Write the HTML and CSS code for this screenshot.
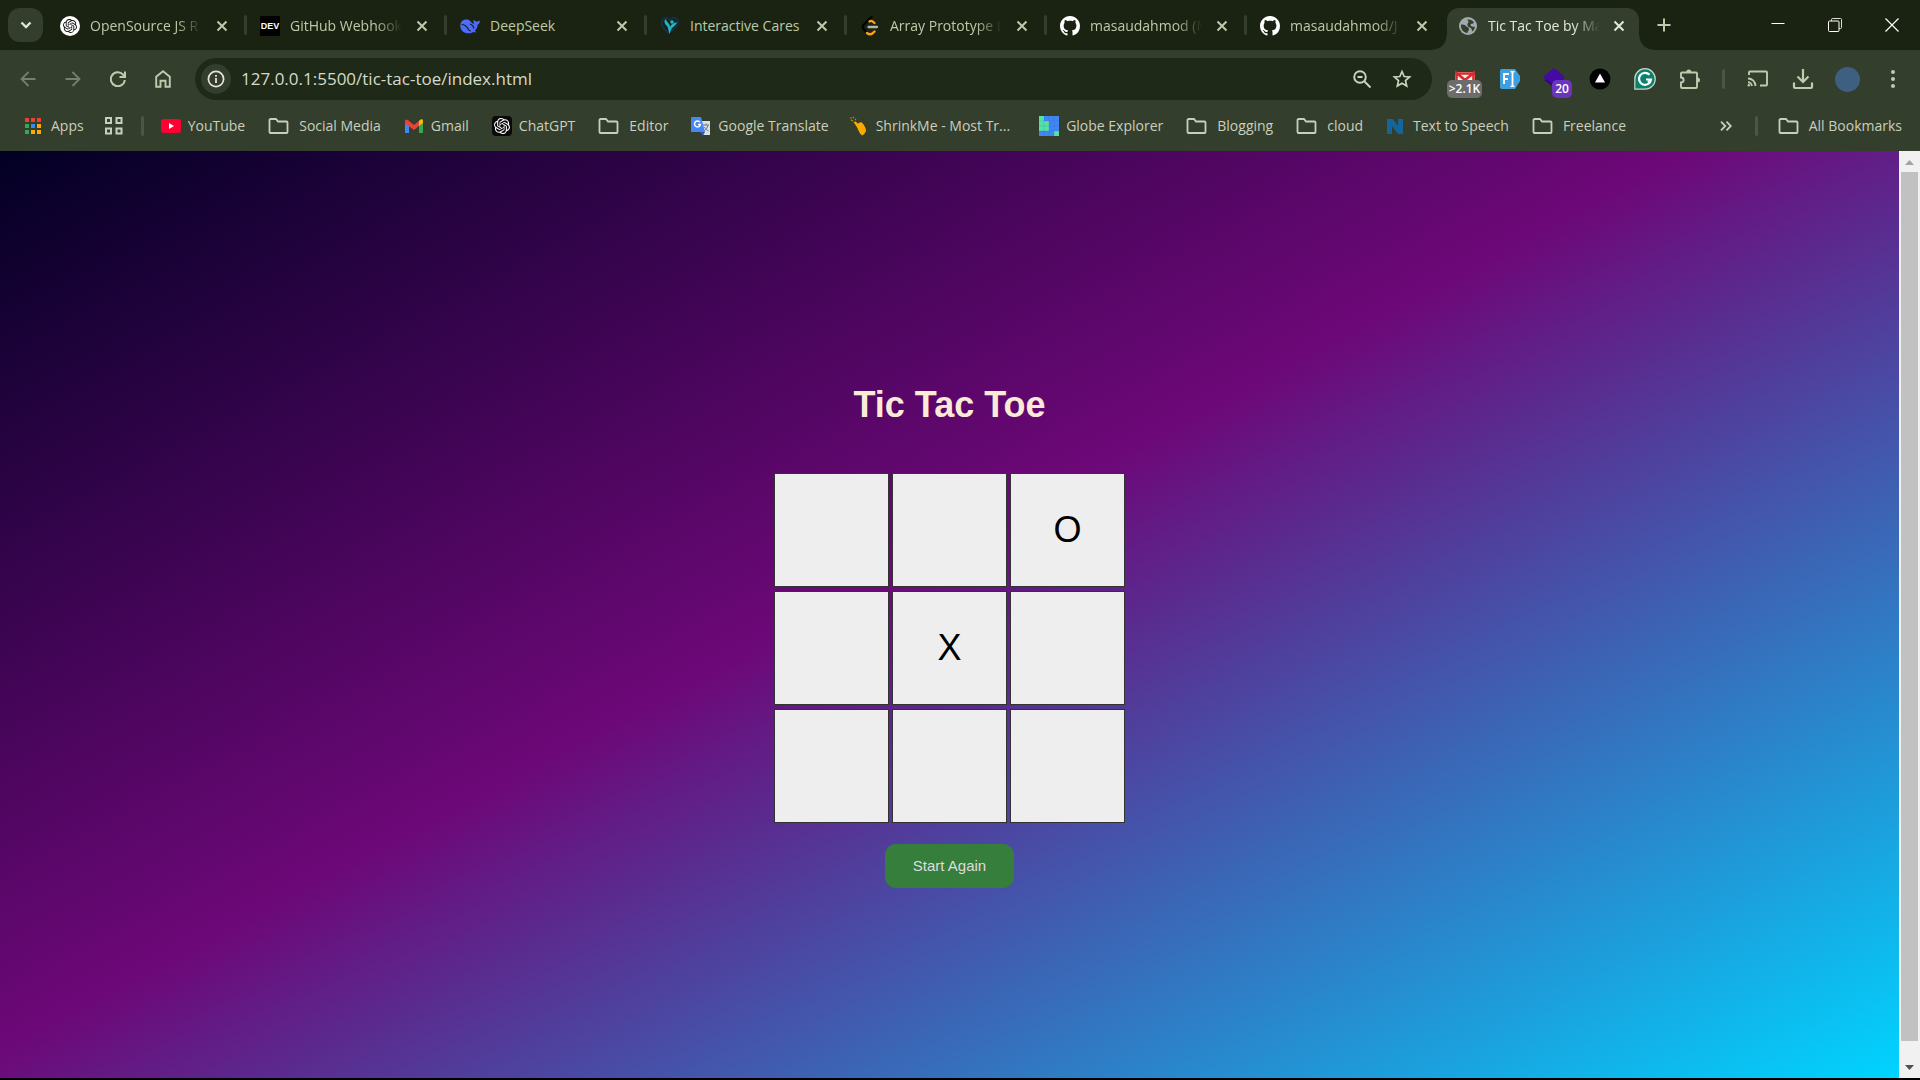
FILE: index.html
```html
<!DOCTYPE html>
<html lang="en">
<head>
<meta charset="utf-8">
<title>Tic Tac Toe</title>
<link rel="stylesheet" href="styles.css">
</head>
<body>
<svg class="defs" aria-hidden="true">
  <symbol id="close" viewBox="0 0 12 12"><path d="M1.5 1.5l9 9M10.500 1.500l-9 9" fill="none" stroke="currentColor" stroke-width="2"/></symbol>
  <symbol id="folder" viewBox="0 0 21 18"><path d="M2.500 2h5.500l2 2.500h8.500a1 1 0 0 1 1 1V15a1 1 0 0 1-1 1h-16a1 1 0 0 1-1-1V3a1 1 0 0 1 1-1z" fill="none" stroke="currentColor" stroke-width="1.800"/></symbol>
  <symbol id="knot" viewBox="0 0 24 24"><path fill="currentColor" d="M22.282 9.821a5.985 5.985 0 0 0-.516-4.910 6.046 6.046 0 0 0-6.510-2.900A6.065 6.065 0 0 0 4.981 4.180a5.985 5.985 0 0 0-3.998 2.900 6.046 6.046 0 0 0 .743 7.097 5.980 5.980 0 0 0 .510 4.911 6.051 6.051 0 0 0 6.515 2.900A5.985 5.985 0 0 0 13.260 24a6.056 6.056 0 0 0 5.772-4.206 5.990 5.990 0 0 0 3.998-2.900 6.056 6.056 0 0 0-.748-7.073zM13.260 22.430a4.476 4.476 0 0 1-2.876-1.040l.142-.081 4.778-2.758a.795.795 0 0 0 .393-.681v-6.737l2.020 1.168a.071.071 0 0 1 .038.052v5.583a4.504 4.504 0 0 1-4.495 4.494zM3.600 18.304a4.470 4.470 0 0 1-.535-3.014l.142.085 4.783 2.759a.771.771 0 0 0 .780 0l5.843-3.369v2.332a.080.080 0 0 1-.033.062L9.740 19.950a4.500 4.500 0 0 1-6.140-1.646zM2.341 7.896a4.485 4.485 0 0 1 2.366-1.973V11.600a.766.766 0 0 0 .388.677l5.815 3.354-2.020 1.169a.076.076 0 0 1-.071 0l-4.830-2.787A4.504 4.504 0 0 1 2.340 7.872zm16.597 3.856l-5.833-3.387L15.119 7.200a.076.076 0 0 1 .071 0l4.830 2.792a4.494 4.494 0 0 1-.676 8.104v-5.677a.790.790 0 0 0-.407-.667zm2.010-3.024l-.141-.085-4.774-2.782a.776.776 0 0 0-.785 0L9.409 9.230V6.897a.066.066 0 0 1 .028-.061l4.830-2.787a4.500 4.500 0 0 1 6.680 4.660zM8.307 12.863l-2.020-1.164a.080.080 0 0 1-.038-.057V6.075a4.500 4.500 0 0 1 7.376-3.454l-.142.081-4.778 2.758a.795.795 0 0 0-.393.682zm1.097-2.366l2.602-1.500 2.607 1.500v2.999l-2.597 1.500-2.607-1.500z"/></symbol>
  <symbol id="github" viewBox="0 0 16 16"><path fill="#fff" d="M8 0C3.580 0 0 3.580 0 8c0 3.540 2.290 6.530 5.470 7.590.4.070.550-.170.550-.380 0-.190-.010-.820-.010-1.490-2.010.370-2.530-.490-2.690-.940-.090-.230-.480-.940-.820-1.130-.280-.150-.680-.520-.010-.530.630-.010 1.080.580 1.230.820.720 1.210 1.870.870 2.330.660.070-.520.280-.870.510-1.070-1.780-.2-3.640-.890-3.640-3.950 0-.870.310-1.590.820-2.150-.080-.2-.360-1.020.080-2.120 0 0 .670-.210 2.200.820.640-.180 1.320-.270 2-.270s1.360.090 2 .270c1.530-1.040 2.200-.820 2.200-.820.440 1.100.160 1.920.080 2.120.510.560.820 1.270.820 2.150 0 3.070-1.870 3.750-3.650 3.950.290.250.540.730.540 1.480 0 1.070-.010 1.930-.010 2.200 0 .210.150.460.550.380A8.013 8.013 0 0 0 16 8c0-4.420-3.580-8-8-8z"/></symbol>
</svg>

<header class="tabstrip">
  <button class="tab-search" aria-label="Search tabs"><svg width="12" height="8" viewBox="0 0 12 8"><path d="M1.500 1.500L6 6l4.500-4.500" fill="none" stroke="currentColor" stroke-width="2.400"/></svg></button>
  <nav class="tabs" aria-label="Tabs">
    <div class="tab">
      <svg class="favicon" viewBox="0 0 20 20"><circle cx="10" cy="10" r="10" fill="#fff"/><use href="#knot" x="3" y="3" width="14" height="14" color="#111"/></svg>
      <span class="tab-title faded">OpenSource JS R</span>
      <button class="tab-close" aria-label="Close tab"><svg><use href="#close"/></svg></button>
    </div>
    <div class="tab">
      <span class="favicon dev">DEV</span>
      <span class="tab-title faded">GitHub Webhook</span>
      <button class="tab-close" aria-label="Close tab"><svg><use href="#close"/></svg></button>
    </div>
    <div class="tab">
      <svg class="favicon" viewBox="0 0 20 20"><path d="M9 4C4 2.500.5 5 .3 9.500c-.2 5 3.700 8 8.200 7.800 2-.1 3.500-.5 4.800-1.300l2.700.6-1-2c2-1.800 2.700-4 2.600-6 1.500-.5 2.300-2 2.200-4.200-1.300.8-2.800.6-3.800 1.400-.5-1-1.200-1.500-2.500-1.800 0 2-.2 3 1 4.500C12.500 8 11 5.500 9 4z" fill="#4d6bfe"/><path d="M1.500 8.500c3 0 5.500 2 7 5 .5 1 1.500 1.500 2.500 1.500M10 8c2 .5 3.500 2 4 4.500" fill="none" stroke="#1a2311" stroke-width="1.200"/></svg>
      <span class="tab-title">DeepSeek</span>
      <button class="tab-close" aria-label="Close tab"><svg><use href="#close"/></svg></button>
    </div>
    <div class="tab">
      <svg class="favicon" viewBox="0 0 20 20"><path d="M9 17C3 13 1 9 2 5c1-4 6-4 8-1 3-4 8-2 8 2 0 3-2 6-6 9" fill="none" stroke="#123047" stroke-width="2"/><path d="M9.500 18C8 14 9 12 6 9 4 7 4 4 6 3c0 3 4 4 4 8 1-3 4-4 7-5-1 4-5 5-6 8z" fill="#1fb6cc"/><circle cx="12" cy="6" r="1.800" fill="#1fb6cc"/></svg>
      <span class="tab-title">Interactive Cares</span>
      <button class="tab-close" aria-label="Close tab"><svg><use href="#close"/></svg></button>
    </div>
    <div class="tab">
      <svg class="favicon" viewBox="0 0 20 20"><g fill="none" stroke-width="2.300" stroke-linecap="round"><path d="M11.500 1L4 8.500c-1.500 1.500-1.500 3.500 0 5L7 17" stroke="#000"/><path d="M9.500 5.500c1.500-1.500 3-.5 5 1.500M7 17c2.500 2 5 1.500 7.500-1.500" stroke="#ffa116"/><path d="M8.500 11H17" stroke="#b3b3b3"/></g></svg>
      <span class="tab-title faded">Array Prototype L</span>
      <button class="tab-close" aria-label="Close tab"><svg><use href="#close"/></svg></button>
    </div>
    <div class="tab">
      <svg class="favicon"><use href="#github"/></svg>
      <span class="tab-title faded">masaudahmod (M</span>
      <button class="tab-close" aria-label="Close tab"><svg><use href="#close"/></svg></button>
    </div>
    <div class="tab">
      <svg class="favicon"><use href="#github"/></svg>
      <span class="tab-title faded">masaudahmod/J</span>
      <button class="tab-close" aria-label="Close tab"><svg><use href="#close"/></svg></button>
    </div>
    <div class="tab active">
      <svg class="favicon" viewBox="0 0 20 20"><circle cx="10" cy="10" r="9" fill="#a3aaae"/><path d="M3 8.500c2 0 4 0 5 1.500s3 1 3 3-1.500 2-1.500 4C5.500 17 2.500 13 3 8.500zM9.500 3.500c2.500-.5 5 .5 6.500 3-1 1.500-2 1-3 1.500s-.5 2 1 2.500c1 .3 2 0 3 .5-.5 2-1.500 3.500-3 4.500 0-2-.5-3.500-2-4-2-.5-3-2-2.500-3.500S11 6 10.500 5.500s-1-1-1-2z" fill="#343e2c"/></svg>
      <span class="tab-title faded">Tic Tac Toe by Ma</span>
      <button class="tab-close" aria-label="Close tab"><svg><use href="#close"/></svg></button>
    </div>
  </nav>
  <button class="new-tab" aria-label="New tab"><svg width="14" height="14" viewBox="0 0 14 14"><path d="M7 .5v13M.5 7h13" stroke="currentColor" stroke-width="2"/></svg></button>
  <div class="window-buttons">
    <button aria-label="Minimize"><svg width="14" height="14" viewBox="0 0 14 14"><path d="M.5 5.500h13" stroke="#fff"/></svg></button>
    <button aria-label="Restore"><svg width="14" height="14" viewBox="0 0 14 14"><path d="M3.500 3V1.500a1 1 0 0 1 1-1h8a1 1 0 0 1 1 1v8a1 1 0 0 1-1 1H11" fill="none" stroke="#ddd"/><rect x=".5" y="3" width="10.500" height="10.500" rx="1" fill="none" stroke="#fff"/></svg></button>
    <button aria-label="Close"><svg width="14" height="14" viewBox="0 0 14 14"><path d="M.5.500l13 13m0-13l-13 13" stroke="#fff" stroke-width="1.200"/></svg></button>
  </div>
</header>

<div class="toolbar">
  <div class="tools">
    <button class="tool dim" aria-label="Back"><svg width="16" height="16" viewBox="0 0 16 16"><path d="M15.500 8H2M8.500 1L1.500 8l7 7" fill="none" stroke="currentColor" stroke-width="1.800"/></svg></button>
    <button class="tool dim" aria-label="Forward"><svg width="16" height="16" viewBox="0 0 16 16"><path d="M.5 8H14M7.500 1l7 7-7 7" fill="none" stroke="currentColor" stroke-width="1.800"/></svg></button>
    <button class="tool" aria-label="Reload"><svg width="16" height="16" viewBox="0 0 16 16"><path d="M14.800 9A7 7 0 1 1 13 3.500l1.500 2M15 .5V6H9.500" fill="none" stroke="currentColor" stroke-width="2"/></svg></button>
    <button class="tool" aria-label="Home"><svg width="16" height="18" viewBox="0 0 16 18"><path d="M1.200 6.700L8 1.300l6.800 5.400v10h-4.300v-6h-5v6H1.200z" fill="none" stroke="currentColor" stroke-width="1.900"/></svg></button>
  </div>
  <form class="omnibox">
    <button type="button" class="site-info" aria-label="Site information"><svg width="18" height="18" viewBox="0 0 18 18"><circle cx="9" cy="9" r="7.600" fill="none" stroke="currentColor" stroke-width="1.700"/><path d="M9 8v5M9 5v1.800" stroke="currentColor" stroke-width="1.800"/></svg></button>
    <input class="url" type="text" aria-label="Address" value="127.0.0.1:5500/tic-tac-toe/index.html">
    <button type="button" class="omni-btn" aria-label="Zoom"><svg width="20" height="20" viewBox="0 0 20 20"><circle cx="8" cy="8" r="5.800" fill="none" stroke="currentColor" stroke-width="1.900"/><path d="M5.500 8h5M12.500 12.500l6 6" stroke="currentColor" stroke-width="1.900"/></svg></button>
    <button type="button" class="omni-btn" aria-label="Bookmark this page"><svg width="20" height="20" viewBox="0 0 20 20"><path d="M10 2.500l2.200 5 5.400.5-4.100 3.600 1.200 5.400L10 14.200 5.300 17l1.200-5.400L2.400 8l5.400-.5z" fill="none" stroke="currentColor" stroke-width="1.700"/></svg></button>
  </form>
  <div class="tools">
    <button class="tool" aria-label="Mail checker"><svg width="22" height="18" viewBox="0 0 22 18"><rect x="1" y="2" width="20" height="14" fill="#eee"/><path d="M1 3.500h20M2.500 16V3l8.500 7 8.500-7v13" fill="none" stroke="#d92b2b" stroke-width="2.600"/></svg><span class="badge">&gt;2.1K</span></button>
    <button class="tool" aria-label="Form filler"><svg width="22" height="22" viewBox="0 0 22 22"><path d="M3 1h13l5 7v5l-5 8H3a2 2 0 0 1-2-2V3a2 2 0 0 1 2-2z" fill="#3d9fe0"/><path d="M5 16V6h5M5 11h4M13.500 4l-2-.5M13.500 4l2-.5M13.500 4v14M11.500 18.500l2-.5 2 .5" fill="none" stroke="#fff" stroke-width="1.800"/></svg></button>
    <button class="tool" aria-label="Layers"><svg width="24" height="22" viewBox="0 0 24 22"><path d="M1 12l10-4 10 4-9 8z" fill="#2b0a78"/><path d="M11 0l11 9-11 8L0 9z" fill="#4509a5"/></svg><span class="badge purple">20</span></button>
    <button class="tool" aria-label="Deploy"><svg width="22" height="22" viewBox="0 0 22 22"><circle cx="11" cy="11" r="10.500"/><path d="M11 5.500l5 9H6z" fill="#fff"/></svg></button>
    <button class="tool" aria-label="Grammar"><svg width="22" height="22" viewBox="0 0 22 22"><path d="M11 .7A10.200 10.200 0 1 1 11 21.200H.8V11A10.200 10.200 0 0 1 11 .7z" fill="#0b806a" stroke="#c8d8cf" stroke-width="1.200"/><path d="M15.500 6.800A6 6 0 1 0 17 11.500h-5M14 14.500l3-3" fill="none" stroke="#fff" stroke-width="2.200"/></svg></button>
    <button class="tool" aria-label="Extensions"><svg width="22" height="22" viewBox="0 0 22 22"><path d="M3 4.500H17a1 1 0 0 1 1 1V19a1 1 0 0 1-1 1H3a1 1 0 0 1-1-1v-4.500c3.500 0 3.500-5 0-5v-4a1 1 0 0 1 1-1z" fill="none" stroke="currentColor" stroke-width="1.900"/><path d="M7.300 4a2.500 2.500 0 0 1 5 0zM18.500 9.500a2.500 2.500 0 0 1 0 5z" fill="currentColor"/></svg></button>
    <span class="divider"></span>
    <button class="tool" aria-label="Cast"><svg width="22" height="18" viewBox="0 0 22 18"><path d="M2 5V2.500a1 1 0 0 1 1-1h16a1 1 0 0 1 1 1v12a1 1 0 0 1-1 1h-6M1 8.500a7.500 7.500 0 0 1 7.500 7.500M1 12.200A3.800 3.800 0 0 1 4.800 16" fill="none" stroke="currentColor" stroke-width="1.900"/><circle cx="1.800" cy="15.300" r="1.200" fill="currentColor"/></svg></button>
    <button class="tool" aria-label="Downloads"><svg width="22" height="22" viewBox="0 0 22 22"><path d="M11 1v13M5.500 8.500L11 14l5.500-5.500M2 14.500V19a1 1 0 0 0 1 1h16a1 1 0 0 0 1-1v-4.500" fill="none" stroke="currentColor" stroke-width="2.200"/></svg></button>
    <button class="tool" aria-label="Profile"><span class="avatar"></span></button>
    <button class="tool" aria-label="Menu"><svg width="6" height="18" viewBox="0 0 6 18"><g fill="currentColor"><circle cx="3" cy="2" r="2"/><circle cx="3" cy="9" r="2"/><circle cx="3" cy="16" r="2"/></g></svg></button>
  </div>
</div>

<nav class="bookmarks" aria-label="Bookmarks">
  <a class="bm" href="#"><svg class="bm-icon" viewBox="0 0 20 20"><path d="M1 2h4v4H1zM7 2h4v4H7zM13 2h4v4h-4z" fill="#ea4335"/><path d="M1 8h4v4H1zM1 14h4v4H1z" fill="#34a853"/><path d="M7 8h4v4H7z" fill="#2e8cf0"/><path d="M13 8h4v4h-4zM7 14h4v4H7zM13 14h4v4h-4z" fill="#fbaa05"/></svg>Apps</a>
  <button class="grid-btn" aria-label="Tab groups"><svg width="20" height="20" viewBox="0 0 20 20"><path d="M2 2h5v5H2zM12.500 2h5v5h-5zM2 12.500h5v5H2zM12.500 12.500h5v5h-5z" fill="none" stroke="currentColor" stroke-width="2"/></svg></button>
  <span class="divider"></span>
  <a class="bm" href="#"><svg class="bm-icon" viewBox="0 0 20 20"><rect y="3" width="20" height="14" rx="3" fill="#ff0033"/><path d="M8 7l5 3-5 3z" fill="#fff"/></svg>YouTube</a>
  <a class="bm" href="#"><svg class="bm-folder"><use href="#folder"/></svg>Social Media</a>
  <a class="bm" href="#"><svg class="bm-icon" viewBox="0 0 20 20"><path d="M1 6v11h4V9z" fill="#4285f4"/><path d="M19 6v11h-4V9z" fill="#34a853"/><path d="M1 5v2.500L10 14l5-4V5l-5 4-5-4C3 3 1 4 1 5z" fill="#ea4335"/><path d="M15 5v5l4-3V5c0-2-2-2.500-4 0z" fill="#fbbc04"/></svg>Gmail</a>
  <a class="bm" href="#"><svg class="bm-icon" viewBox="0 0 20 20"><rect width="20" height="20" rx="4" fill="#0a0a0a"/><use href="#knot" x="2" y="2" width="16" height="16" color="#fff"/></svg>ChatGPT</a>
  <a class="bm" href="#"><svg class="bm-folder"><use href="#folder"/></svg>Editor</a>
  <a class="bm" href="#"><svg class="bm-icon" viewBox="0 0 20 20"><path d="M9 5h10v14h-7z" fill="#dcdfe3"/><path d="M12 9h6M15 7.500V9M17 9c-.5 3-2 4.500-4 6M13.500 11c1 2 2 3 4 4" fill="none" stroke="#607d8b"/><path d="M9 16h5l-2 3.500z" fill="#3a55b4"/><path d="M1 1h9l4 15H1a1 1 0 0 1-1-1V2a1 1 0 0 1 1-1z" fill="#4688f1"/><path d="M9 6.200A3 3 0 1 0 9.500 8.500H7" fill="none" stroke="#fff" stroke-width="1.400"/></svg>Google Translate</a>
  <a class="bm wide" href="#"><svg class="bm-icon" viewBox="0 0 20 20"><path d="M4.500 6l2-.5L9 7.500 12 6c3 2 5 6 5 9-1 2-2 4-4 4.500C10 17 9 13 7.500 10.500z" fill="#f9ab00"/><path d="M1 2h2M4 1l1 1M2 4l2 1M6 3l1 1" stroke="#b78a1e" stroke-width="1.200"/></svg>ShrinkMe - Most Tr...</a>
  <a class="bm" href="#"><svg class="bm-icon" viewBox="0 0 20 20"><rect width="20" height="20" fill="#4285f4"/><path d="M0 0h5v5h5v10H0zM15 15h5v5h-5z" fill="#55e3a4"/><path d="M5 0v20M10 0v20M15 0v20M0 5h20M0 10h20M0 15h20" stroke="#2f6fd0" stroke-opacity=".4" stroke-width=".6"/></svg>Globe Explorer</a>
  <a class="bm" href="#"><svg class="bm-folder"><use href="#folder"/></svg>Blogging</a>
  <a class="bm" href="#"><svg class="bm-folder"><use href="#folder"/></svg>cloud</a>
  <a class="bm" href="#"><svg class="bm-icon" viewBox="0 0 20 20"><path d="M1 3h6l5 7V3h5v15h-5L6 10v8H1z" fill="#15649c"/></svg>Text to Speech</a>
  <a class="bm" href="#"><svg class="bm-folder"><use href="#folder"/></svg>Freelance</a>
  <div class="bm-end">
    <button class="more" aria-label="More bookmarks"><svg width="12" height="10" viewBox="0 0 12 10"><path d="M1 .7L5.300 5 1 9.300M6.500.7L10.800 5 6.500 9.300" fill="none" stroke="currentColor" stroke-width="1.800"/></svg></button>
    <span class="divider"></span>
    <a class="bm" href="#"><svg class="bm-folder"><use href="#folder"/></svg>All Bookmarks</a>
  </div>
</nav>

<div class="viewport">
  <main class="game">
    <h1 class="title">Tic Tac Toe</h1>
    <div class="board">
      <button class="cell" aria-label="Empty"></button>
      <button class="cell" aria-label="Empty"></button>
      <button class="cell">O</button>
      <button class="cell" aria-label="Empty"></button>
      <button class="cell">X</button>
      <button class="cell" aria-label="Empty"></button>
      <button class="cell" aria-label="Empty"></button>
      <button class="cell" aria-label="Empty"></button>
      <button class="cell" aria-label="Empty"></button>
    </div>
    <button class="restart">Start Again</button>
  </main>
  <div class="scrollbar" aria-hidden="true">
    <svg class="arrow" viewBox="0 0 21 21"><path d="M6 14l4.500-5 4.500 5z" fill="#a3a3a3"/></svg>
    <div class="thumb"></div>
    <svg class="arrow" viewBox="0 0 21 21"><path d="M6 8l4.500 5L15 8z" fill="#505050"/></svg>
  </div>
</div>
</body>
</html>
```
FILE: styles.css
```css
* {
  box-sizing: border-box;
}

body {
  margin: 0;
  min-height: 100vh;
  display: flex;
  flex-direction: column;
  padding-bottom: 2px;
  background: #000;
  font-family: "Open Sans", "Noto Sans", sans-serif;
  font-size: 14px;
}

button {
  border: 0;
  padding: 0;
  background: none;
  color: inherit;
  font: inherit;
}

svg {
  display: block;
}

.defs {
  display: none;
}

/* Tab strip */
.tabstrip {
  display: flex;
  height: 50px;
  background: #1a2311;
  color: #bccaa9;
}

.tab-search {
  width: 35px;
  height: 34px;
  margin: 8px 3px 8px 8px;
  border-radius: 12px;
  background: #343e2c;
  color: #dfe6d0;
  display: grid;
  place-items: center;
}

.tabs {
  display: flex;
  min-width: 0;
}

.tab {
  position: relative;
  display: flex;
  align-items: center;
  width: 200px;
  padding: 1px 18px 0 14px;
}

.tab:not(.active)::after {
  content: "";
  position: absolute;
  right: -1px;
  top: 15px;
  width: 3px;
  height: 20px;
  border-radius: 2px;
  background: #343e2c;
}

.tab:nth-last-child(2)::after {
  display: none;
}

.tab.active {
  width: 192px;
  height: 42px;
  margin-left: 1px;
  align-self: flex-end;
  padding: 0 14px 7px 11px;
  border-radius: 12px 12px 0 0;
  background: #343e2c;
  color: #e3e8d8;
}

.tab.active::before,
.tab.active::after {
  content: "";
  position: absolute;
  bottom: 0;
  width: 14px;
  height: 14px;
}

.tab.active::before {
  left: -14px;
  background: radial-gradient(circle at 0 0, transparent 13px, #343e2c 14px);
}

.tab.active::after {
  right: -14px;
  background: radial-gradient(circle at 100% 0, transparent 13px, #343e2c 14px);
}

.favicon {
  flex: none;
  width: 20px;
  height: 20px;
  margin-right: 10px;
}

.dev {
  background: #000;
  color: #fff;
  font: bold 10px/20px "Liberation Sans", Arial, sans-serif;
  font-size: 9px;
  text-align: center;
}

.tab-title {
  width: 112px;
  margin-right: 14px;
  overflow: hidden;
  white-space: nowrap;
  line-height: 20px;
}

.faded {
  mask-image: linear-gradient(90deg, #000 86px, transparent 112px);
}

.tab-close svg {
  width: 12px;
  height: 12px;
}

.new-tab {
  width: 50px;
  display: grid;
  place-items: center;
}

.window-buttons {
  display: flex;
  margin-left: auto;
}

.window-buttons button {
  width: 57px;
  display: grid;
  place-items: center;
}

/* Toolbar */
.toolbar {
  display: flex;
  align-items: center;
  gap: 10px;
  height: 58px;
  padding: 0 5px;
  background: #343e2c;
  color: #bfcbad;
}

.tools {
  display: flex;
  align-items: center;
}

.tool {
  position: relative;
  width: 45px;
  height: 42px;
  display: grid;
  place-items: center;
}

.dim {
  color: #76806a;
}

.badge {
  position: absolute;
  left: 5px;
  top: 22px;
  width: 35px;
  height: 18px;
  border-radius: 5px;
  background: #6c6c6c;
  color: #fff;
  font-weight: 600;
  font-size: 12px;
  line-height: 18px;
}

.badge.purple {
  left: 20px;
  width: 20px;
  background: #6a35bd;
}

.omnibox {
  flex: 1;
  display: flex;
  align-items: center;
  height: 42px;
  padding: 0 10px 0 6px;
  border-radius: 21px;
  background: #1f2918;
  color: #cbd4bd;
}

.site-info {
  width: 30px;
  height: 30px;
  margin-right: 10px;
  border-radius: 50%;
  background: #343e2c;
  color: #e3e3dc;
  display: grid;
  place-items: center;
}

.url {
  flex: 1;
  min-width: 0;
  border: 0;
  padding: 0;
  background: none;
  color: #d5dbc9;
  font: 17px/24px "Open Sans", "Noto Sans", sans-serif;
}

.omni-btn {
  width: 40px;
  height: 40px;
  display: grid;
  place-items: center;
}

.avatar {
  width: 25px;
  height: 25px;
  border-radius: 50%;
  background: #3f5f80;
}

.divider {
  flex: none;
  width: 3px;
  height: 20px;
  margin: 0 10px;
  border-radius: 2px;
  background: #4b5740;
}

/* Bookmarks bar */
.bookmarks {
  display: flex;
  align-items: center;
  gap: 23px;
  height: 43px;
  padding: 0 18px 7px 24px;
  background: #343e2c;
  color: #c9cfbe;
  white-space: nowrap;
}

.grid-btn {
  margin: 0 -3px;
}

.bookmarks .divider {
  margin: 0 -6px 0 -3px;
}

.bm {
  display: flex;
  align-items: center;
  color: inherit;
  text-decoration: none;
  line-height: 20px;
}

.bm-icon {
  width: 20px;
  height: 20px;
  margin-right: 7px;
}

.bm-folder {
  width: 21px;
  height: 18px;
  margin-right: 10px;
}

.bm.wide {
  margin: 0 6px 0 -3px;
}

.bm-end {
  display: flex;
  align-items: center;
  gap: 26px;
  margin-left: auto;
}

/* Page */
.viewport {
  flex: 1;
  display: flex;
}

.game {
  flex: 1;
  display: flex;
  flex-direction: column;
  align-items: center;
  justify-content: center;
  background: linear-gradient(152deg, #020024 0%, #6d0878 46.3%, #00d4ff 100%);
  font-family: "Liberation Sans", Arial, sans-serif;
}

.title {
  margin: 42px 0 47px;
  color: #faebd7;
  font-size: 36px;
  line-height: 42px;
}

.board {
  display: grid;
  grid-template-columns: repeat(3, 115px);
  grid-auto-rows: 114px;
  gap: 4px 3px;
}

.cell {
  border: 1px solid #333;
  background: #eee;
  color: #000;
  font-size: 36px;
}

.restart {
  width: 129px;
  height: 44px;
  margin-top: 21px;
  border-radius: 11px;
  background: #357e3c;
  color: #ddd;
  font-size: 15px;
}

.scrollbar {
  width: 21px;
  display: flex;
  flex-direction: column;
  background: #f1f1f1;
}

.arrow {
  width: 21px;
  height: 21px;
}

.thumb {
  flex: 1;
  margin: 0 2px 16px;
  background: #c1c1c1;
}
```
